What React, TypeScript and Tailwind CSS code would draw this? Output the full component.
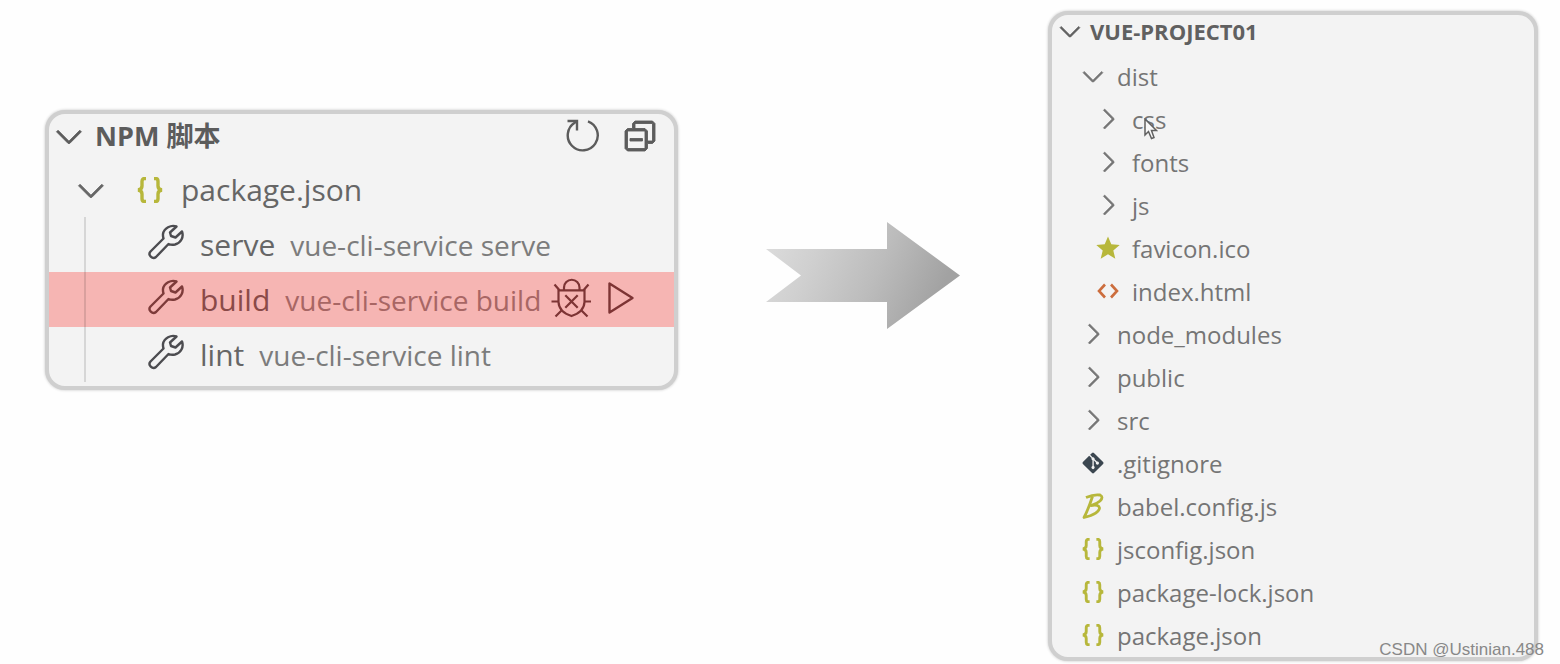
import type { ReactNode } from "react";
import { FaGitAlt } from "react-icons/fa";
import { VscChevronDown, VscChevronRight, VscCollapseAll } from "react-icons/vsc";

type Script = { name: string; command: string; active?: boolean };

type IconName = "open" | "closed" | "star" | "html" | "git" | "babel" | "json";

type TreeItem = { name: string; icon: IconName; depth: 1 | 2; pointer?: boolean };

const scripts: Script[] = [
  { name: "serve", command: "vue-cli-service serve" },
  { name: "build", command: "vue-cli-service build", active: true },
  { name: "lint", command: "vue-cli-service lint" },
];

const tree: TreeItem[] = [
  { name: "dist", icon: "open", depth: 1 },
  { name: "css", icon: "closed", depth: 2, pointer: true },
  { name: "fonts", icon: "closed", depth: 2 },
  { name: "js", icon: "closed", depth: 2 },
  { name: "favicon.ico", icon: "star", depth: 2 },
  { name: "index.html", icon: "html", depth: 2 },
  { name: "node_modules", icon: "closed", depth: 1 },
  { name: "public", icon: "closed", depth: 1 },
  { name: "src", icon: "closed", depth: 1 },
  { name: ".gitignore", icon: "git", depth: 1 },
  { name: "babel.config.js", icon: "babel", depth: 1 },
  { name: "jsconfig.json", icon: "json", depth: 1 },
  { name: "package-lock.json", icon: "json", depth: 1 },
  { name: "package.json", icon: "json", depth: 1 },
];

// thickens the outline of the codicon glyphs a little
const heavier = "stroke-current [stroke-width:0.35]";

function BracesIcon({ className }: { className: string }) {
  return (
    <svg viewBox="0 0 26 26" className={className} fill="none" stroke="#b7b73b" strokeWidth="3.4" aria-hidden="true">
      <path d="M9 1.5H7.5Q5 1.5 5 4.5V9Q5 12.5 1 13Q5 13.5 5 17V21.5Q5 24.5 7.5 24.5H9" />
      <path d="M17 1.5H18.5Q21 1.5 21 4.5V9Q21 12.5 25 13Q21 13.5 21 17V21.5Q21 24.5 18.5 24.5H17" />
    </svg>
  );
}

function WrenchIcon() {
  return (
    <svg viewBox="0 0 36 36" className="size-9" fill="none" stroke="currentColor" strokeWidth="2.4" strokeLinejoin="round" aria-hidden="true">
      <path d="M28.5 2.5C23 .5 16 4 15 10Q14.8 12.5 15.5 14.5L2.5 27.5C-.5 31 4.5 36 8 33L20.5 20Q23.5 21.2 27 20.5C33 19 36 13 34 7.5L27.5 13.5L23 12L22 8.5Z" />
    </svg>
  );
}

function RefreshIcon() {
  return (
    <svg viewBox="0 0 36 36" className="size-9" fill="none" stroke="currentColor" strokeWidth="2.4" aria-hidden="true">
      <path d="M24 3.3A15 15 0 1 1 11 4.5L13 3" />
      <path d="M3.5 3H13V12.5" />
    </svg>
  );
}

function BugIcon() {
  return (
    <svg viewBox="0 0 40 40" className="size-10" fill="none" stroke="currentColor" strokeWidth="2.2" aria-hidden="true">
      <path d="M13 12V9.5A7.7 7.7 0 0 1 28.5 9.5V12" />
      <path d="M7.5 12.3H33.5V24Q33 34 20.5 38Q8 34 7.5 24Z" />
      <path d="M3.5 6.5L8.5 12.3M37.5 6.5L32.5 12.3M.5 23.5H7.5M33.5 23.5H40M4.5 38.5L11 32M36.5 38.5L30 32" />
      <path d="M14.3 17.3L26.7 29.7M26.7 17.3L14.3 29.7" />
    </svg>
  );
}

function PlayIcon() {
  return (
    <svg viewBox="0 0 28 34" className="h-[34px] w-7" fill="none" stroke="currentColor" strokeWidth="2.4" strokeLinejoin="round" aria-hidden="true">
      <path d="M2.5 2.5V31.5L25.5 17Z" />
    </svg>
  );
}

function ItemIcon({ icon }: { icon: IconName }) {
  switch (icon) {
    case "open":
      return <VscChevronDown className={`size-8 ${heavier}`} />;
    case "closed":
      return <VscChevronRight className={`size-8 ${heavier}`} />;
    case "star":
      return (
        <svg viewBox="0 0 24 24" className="size-6" fill="#b7b73b" aria-hidden="true">
          <path d="M12 .5L15.3 8.3L23.7 9L17.3 14.5L19.3 22.7L12 18.3L4.7 22.7L6.7 14.5L.3 9L8.7 8.3Z" />
        </svg>
      );
    case "html":
      return (
        <svg viewBox="0 0 22 16" className="h-4 w-[22px]" fill="none" stroke="#cc6d3d" strokeWidth="2.6" aria-hidden="true">
          <path d="M8 1.5L2 8L8 14.5M14 1.5L20 8L14 14.5" />
        </svg>
      );
    case "git":
      return <FaGitAlt className="size-6 text-[#3b4650]" />;
    case "babel":
      return (
        <svg viewBox="0 0 22 26" className="h-[26px] w-[22px]" fill="none" stroke="#b7b73b" strokeWidth="2.8" strokeLinejoin="round" aria-hidden="true">
          <path d="M4 4.5Q12 1 18 2Q22 4 18 8Q14.5 11 9 12.5Q17 11 17.5 15Q17 21 2 24.5Q6 17 10.5 3.5" />
        </svg>
      );
    case "json":
      return <BracesIcon className="size-[22px]" />;
  }
}

function Panel({ className, label, children }: { className: string; label: string; children: ReactNode }) {
  return (
    <section
      aria-label={label}
      className={`overflow-hidden rounded-[20px] border-4 border-[#cfcfcf] bg-[#f3f3f3] shadow-[0_0_3px_#c4c4c4] ${className}`}
    >
      {children}
    </section>
  );
}

function ScriptRow({ script }: { script: Script }) {
  return (
    <li className={`flex h-[55px] items-center pl-[35px] ${script.active ? "bg-[#f6b5b3] text-[#8a4a48]" : "text-[#666]"}`}>
      <span className={`w-0.5 self-stretch ${script.active ? "bg-[#d9a09e]" : "bg-[#d6d6d6]"}`} />
      <span className={`ml-[62px] pb-1.5 ${script.active ? "text-[#7d3b3a]" : "text-[#4c4c50]"}`}>
        <WrenchIcon />
      </span>
      <span className="ml-4 text-[30px]">{script.name}</span>
      <span className={`ml-[15px] text-[28px] ${script.active ? "text-[#a86664]" : "text-[#7c7c7c]"}`}>{script.command}</span>
      {script.active && (
        <span className="flex items-center gap-4 pb-1 pl-2.5 text-[#7d3434]">
          <button type="button" aria-label="Debug script">
            <BugIcon />
          </button>
          <button type="button" aria-label="Run script">
            <PlayIcon />
          </button>
        </span>
      )}
    </li>
  );
}

function ScriptsPanel() {
  return (
    <Panel label="NPM scripts" className="mt-[110px] flex-[634] pb-1">
      <header className="flex h-12 items-center pb-1 pr-3.5 text-[#5c5c5c]">
        <button type="button" className="flex items-center gap-1.5">
          <VscChevronDown className={`size-10 ${heavier}`} />
          <h2 className="text-[27px] font-bold">NPM 脚本</h2>
        </button>
        <div className="ml-auto flex items-center gap-5">
          <button type="button" aria-label="Refresh">
            <RefreshIcon />
          </button>
          <button type="button" aria-label="Collapse all">
            <VscCollapseAll className={`size-10 ${heavier}`} />
          </button>
        </div>
      </header>
      <button type="button" className="flex h-[55px] items-center pl-[22px] text-[#666]">
        <VscChevronDown className={`size-10 ${heavier}`} />
        <BracesIcon className="ml-[26px] size-[26px]" />
        <span className="ml-[18px] text-[30px]">package.json</span>
      </button>
      <ul>
        {scripts.map((script) => (
          <ScriptRow key={script.name} script={script} />
        ))}
      </ul>
    </Panel>
  );
}

function ProjectPanel() {
  return (
    <Panel label="Project files" className="mt-[11px] flex-[489]">
      <button type="button" className="flex h-8 items-center gap-1 pl-0.5 text-[#606060]">
        <VscChevronDown className={`size-8 ${heavier}`} />
        <h2 className="text-[22px] font-bold">VUE-PROJECT01</h2>
      </button>
      <ul className="pt-2 text-[24px] text-[#757575]">
        {tree.map((item) => (
          <li key={item.name}>
            <button type="button" className={`relative flex h-[43px] items-center gap-2 ${item.depth === 1 ? "pl-[25px]" : "pl-10"}`}>
              <span className="flex w-8 justify-center pb-0.5">
                <ItemIcon icon={item.icon} />
              </span>
              <span>{item.name}</span>
              {item.pointer && (
                <svg viewBox="0 0 14 22" className="absolute right-2 top-5 h-[22px] w-3.5" fill="#f8f8f8" stroke="#606060" strokeWidth="1.5" aria-hidden="true">
                  <path d="M1 1V17L4.5 13.5L7.5 20.5L10 19.5L7.5 12.5H12.5Z" />
                </svg>
              )}
            </button>
          </li>
        ))}
      </ul>
    </Panel>
  );
}

function Arrow() {
  return (
    <svg viewBox="0 0 194 107" className="mt-[222px] w-[194px] shrink-0" aria-hidden="true">
      <defs>
        <linearGradient id="arrow-fill" x1="0" y1="0" x2="1" y2="0.25">
          <stop offset="0" stopColor="#dedede" />
          <stop offset="0.3" stopColor="#d0d0d0" />
          <stop offset="0.65" stopColor="#bcbcbc" />
          <stop offset="1" stopColor="#a2a2a2" />
        </linearGradient>
      </defs>
      <path d="M0 27H121V0L194 53.5L121 107V80H0L35 53.5Z" fill="url(#arrow-fill)" />
    </svg>
  );
}

export default function App() {
  return (
    <main className="relative flex min-h-screen items-start gap-[88px] bg-[#fefefe] pl-[45px] pr-[22px] font-['Open_Sans','Noto_Sans_CJK_SC',sans-serif]">
      <ScriptsPanel />
      <Arrow />
      <ProjectPanel />
      <p className="absolute bottom-0.5 right-4 font-['Liberation_Sans',sans-serif] text-[17px] text-[#888]">CSDN @Ustinian.488</p>
    </main>
  );
}
